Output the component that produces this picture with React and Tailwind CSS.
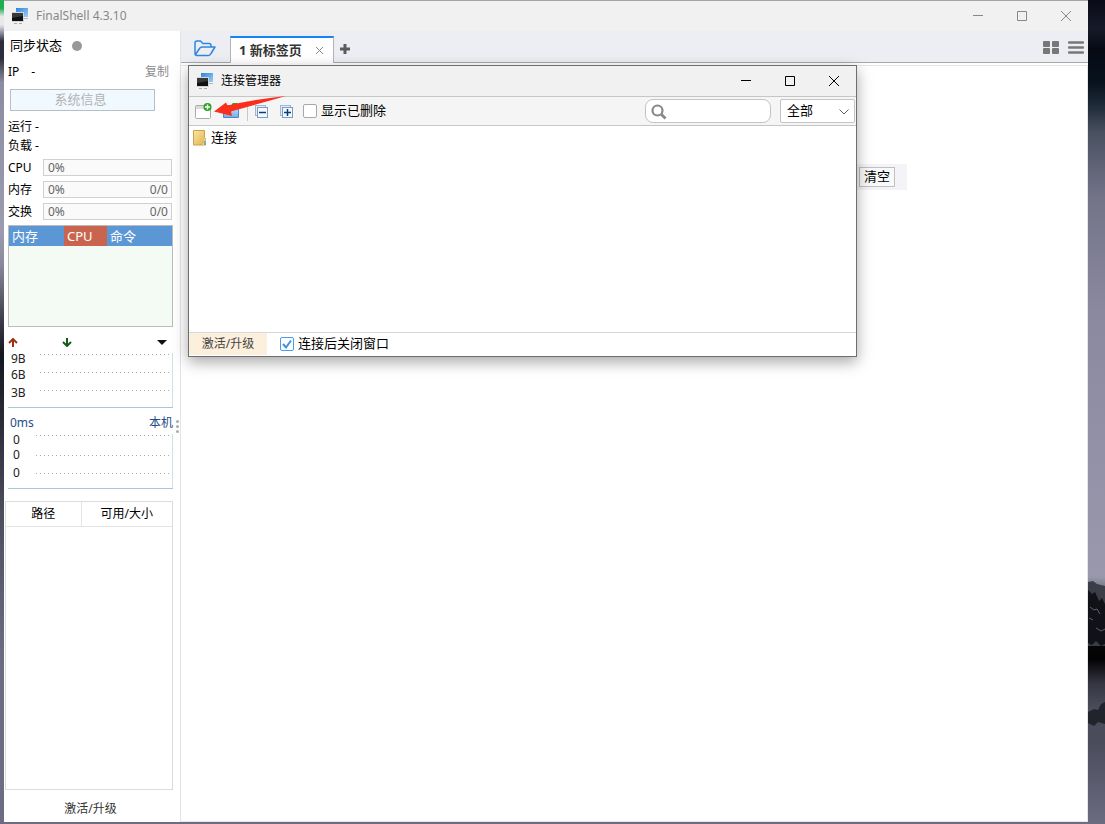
import { useState } from "react"

const usage = [
  { label: "CPU", percent: "0%", detail: "" },
  { label: "内存", percent: "0%", detail: "0/0" },
  { label: "交换", percent: "0%", detail: "0/0" },
]

// Two overlapping monitors, used in both title bars
function AppIcon() {
  return (
    <svg viewBox="0 0 16 16" className="w-4 h-4">
      <defs>
        <linearGradient id="screen" x1="0" y1="0" x2="1" y2="1">
          <stop offset="0" stopColor="#2f83dc" />
          <stop offset="1" stopColor="#9bd0f8" />
        </linearGradient>
      </defs>
      <rect x="4" y="0" width="12" height="9" fill="url(#screen)" />
      <rect x="12" y="10" width="4" height="1" fill="#b8b8b8" />
      <rect x="0" y="4" width="12" height="10" fill="#d4d4d4" />
      <rect x="0" y="5" width="11" height="8" fill="#111" />
      <path d="M0 5h11v3l-11 2z" fill="#383838" />
      <path d="M2 15h3v1H2zM7 15h3v1H7z" fill="#aaa" />
    </svg>
  )
}

function WindowButtons({ color }) {
  return (
    <div className="flex" style={{ color }}>
      <button aria-label="最小化" className="w-11 h-[30px] flex items-center justify-center">
        <svg width="10" height="10" stroke="currentColor"><path d="M0 4.5h10" /></svg>
      </button>
      <button aria-label="最大化" className="w-11 h-[30px] flex items-center justify-center">
        <svg width="10" height="10" fill="none" stroke="currentColor"><path d="M.5.5h9v9h-9z" /></svg>
      </button>
      <button aria-label="关闭" className="w-11 h-[30px] flex items-center justify-center">
        <svg width="10" height="10" stroke="currentColor"><path d="M0 0l10 10M10 0L0 10" /></svg>
      </button>
    </div>
  )
}

// Small line chart: labels on the left, dotted grid lines, border right and bottom
function Chart({ rows, left, base }) {
  return (
    <svg viewBox="0 0 165 55" className="block w-full overflow-visible" fontFamily="'Noto Sans', sans-serif">
      {rows.map((row) => (
        <g key={row.y}>
          <text x={base} y={row.textY} fontSize="12" fill="#222">{row.label}</text>
          <path d={`M${left} ${row.y + 0.5}H163`} stroke="#aaa" strokeDasharray="1 3" />
        </g>
      ))}
      <path d="M164.5 0V55" stroke="#cfe2e8" />
      <path d="M0 54.5H165" stroke="#a9c9d2" />
    </svg>
  )
}

function Sidebar() {
  return (
    <aside className="w-[177px] shrink-0 bg-white border-r border-[#e4e4e4] flex flex-col pl-1 pr-[7px]">
      <div className="flex items-center h-[29px] pl-0.5">
        <span>同步状态</span>
        <span className="ml-[10px] w-[10px] h-[10px] rounded-full bg-[#999]" />
      </div>
      <div className="flex items-center h-6 pr-1 text-xs">
        <span>IP</span>
        <span className="ml-3">-</span>
        <button className="ml-auto text-[#8c8c8c]">复制</button>
      </div>
      <button className="mt-[5px] ml-0.5 mr-[18px] h-[22px] shrink-0 border border-[#b8bfc3] bg-[#f0f9ff] pr-1 text-[#b3b3b3]">
        系统信息
      </button>

      <div className="mt-[6px] text-xs leading-[19px]">
        <div>运行 -</div>
        <div>负载 -</div>
      </div>
      <div className="mt-1 flex flex-col gap-[5px] text-xs pr-px">
        {usage.map((item) => (
          <div key={item.label} className="flex items-center h-[17px]">
            <span className="w-[35px]">{item.label}</span>
            <div className="flex-1 h-[17px] flex items-center justify-between border border-[#d0d0d0] bg-[#fafafa] text-[#666] pl-1 pr-[3px]">
              <span>{item.percent}</span>
              <span>{item.detail}</span>
            </div>
          </div>
        ))}
      </div>

      <div className="mt-[5px] h-[102px] shrink-0 border border-[#bcbcbc] bg-[#f4faf4]">
        <table className="w-full table-fixed text-white leading-5">
          <thead>
            <tr className="bg-[#5b97d5] text-left">
              <th className="w-[55px] p-0 pl-[3px] font-normal">内存</th>
              <th className="w-[43px] p-0 pl-[3px] font-normal bg-[#c9654f]">CPU</th>
              <th className="p-0 pl-[3px] font-normal">命令</th>
            </tr>
          </thead>
        </table>
      </div>

      {/* network traffic */}
      <div className="mt-[8px] h-[15px] flex items-center">
        <svg width="10" height="9" className="text-[#a0330f]" fill="none" stroke="currentColor" strokeWidth="2"><path d="M1 5l4-4 4 4M5 1v8" /></svg>
        <svg width="10" height="9" className="ml-11 text-[#155c1b]" fill="none" stroke="currentColor" strokeWidth="2"><path d="M1 4l4 4 4-4M5 8V0" /></svg>
        <button aria-label="网卡" className="ml-auto mr-[6px]">
          <svg width="10" height="5" fill="#111"><path d="M0 0h10L5 5z" /></svg>
        </button>
      </div>
      <div className="mt-[3px]">
        <Chart
          left={32}
          base={3}
          rows={[
            { label: "9B", y: 1, textY: 10 },
            { label: "6B", y: 19, textY: 26 },
            { label: "3B", y: 37, textY: 44 },
          ]}
        />
      </div>

      {/* latency */}
      <div className="mt-[6px] h-[18px] flex items-center justify-between pl-0.5 text-xs text-[#1f4e86]">
        <span>0ms</span>
        <button>本机</button>
      </div>
      <div className="mt-[2px]">
        <Chart
          left={28}
          base={5}
          rows={[
            { label: "0", y: 1, textY: 10 },
            { label: "0", y: 21, textY: 25 },
            { label: "0", y: 39, textY: 43 },
          ]}
        />
      </div>

      <div className="mt-3 -ml-[3px] flex-1 border border-[#dcdcdc]">
        <table className="w-full table-fixed text-xs leading-6">
          <thead>
            <tr className="border-b border-[#e4e4e4]">
              <th className="w-[75px] p-0 font-normal border-r border-[#e4e4e4]">路径</th>
              <th className="p-0 font-normal">可用/大小</th>
            </tr>
          </thead>
        </table>
      </div>
      <button className="h-8 pt-[6px] shrink-0 text-xs text-[#333]">激活/升级</button>
    </aside>
  )
}

function TabBar() {
  return (
    <div className="h-8 shrink-0 flex items-end bg-[#eceef3] border-b border-[#a9a9ab]">
      <button aria-label="打开" className="ml-[13px] w-9 h-[27px] flex items-center">
        <svg width="22" height="17" viewBox="0 0 22 17" fill="none" stroke="#2f86dc" strokeWidth="1.5" strokeLinejoin="round">
          <path d="M3 15.500Q1 15.500 1 13.500V3Q1 1 3 1h3.500l2.500 2.500h6Q17 3.500 17 5.500V7" />
          <path d="M1.500 14.500L5.500 8.500Q6.500 7 8 7h13L17 13.500Q16 15.500 14.500 15.500H3" />
        </svg>
      </button>
      <div className="-mb-px h-[27px] w-[104px] flex items-center justify-between border border-t-2 border-b-0 border-[#b4b4b8] border-t-[#1683f5] bg-white pl-2 pr-[9px]">
        <span className="font-bold text-[#333]">1 新标签页</span>
        <button aria-label="关闭标签" className="text-[#888]">
          <svg width="9" height="9" className="block" stroke="currentColor"><path d="M1 1l7 7M8 1L1 8" /></svg>
        </button>
      </div>
      <button aria-label="新建标签" className="ml-[6px] h-[27px] flex items-center">
        <svg width="10" height="10" stroke="#5b5b5b" strokeWidth="3"><path d="M5 0v10M0 5h10" /></svg>
      </button>
      <div className="ml-auto mr-1 h-[30px] flex items-center gap-[9px]">
        <button aria-label="网格">
          <svg width="16" height="13" className="block" fill="#777">
            <rect width="7" height="6" rx="1" />
            <rect x="9" width="7" height="6" rx="1" />
            <rect y="7" width="7" height="6" rx="1" />
            <rect x="9" y="7" width="7" height="6" rx="1" />
          </svg>
        </button>
        <button aria-label="菜单">
          <svg width="16" height="13" className="block" stroke="#777" strokeWidth="2.400" strokeLinecap="round"><path d="M1 1.500h14M1 6.500h14M1 11.500h14" /></svg>
        </button>
      </div>
    </div>
  )
}

function TreeButton({ label, d }) {
  return (
    <button aria-label={label}>
      <svg width="13" height="13" className="block">
        <rect x=".5" y=".5" width="10" height="10" fill="#e5eef8" stroke="#9db7d3" />
        <rect x="2.500" y="2.500" width="10" height="10" fill="#f4f9ff" stroke="#7b9cc2" />
        <path d={d} stroke="#0c3b75" strokeWidth="1.500" />
      </svg>
    </button>
  )
}

function ConnectionManager() {
  const [showDeleted, setShowDeleted] = useState(false)
  const [closeAfter, setCloseAfter] = useState(true)

  return (
    <section className="absolute left-[188px] top-[65px] w-[669px] h-[292px] flex flex-col border border-[#6e6e6e] bg-white shadow-[0_5px_14px_rgba(0,0,0,0.35)]">
      <header className="h-[30px] shrink-0 flex items-center bg-[#f1f1f1] pl-2">
        <AppIcon />
        <h2 className="ml-2 text-xs">连接管理器</h2>
        <div className="ml-auto">
          <WindowButtons color="#000" />
        </div>
      </header>

      <div className="relative h-[30px] shrink-0 flex items-center border-y border-[#c6c6c6] bg-[#f5f5f5] pl-[6px] pr-px">
        <button aria-label="新建连接">
          <svg width="17" height="16" className="block">
            <rect x=".5" y="2.500" width="15" height="13" rx="1" fill="#fff" stroke="#aaa" />
            <path d="M1 3h14v3H1z" fill="#dadada" />
            <circle cx="12.500" cy="4" r="4" fill="#27a51f" />
            <path d="M12.500 1.500v5M10 4h5" stroke="#fff" strokeWidth="1.500" />
          </svg>
        </button>
        <button aria-label="新建文件夹" className="ml-[10px]">
          <svg width="18" height="16" className="block">
            <defs>
              <linearGradient id="blueFolder" x1="0" y1="0" x2="0" y2="1">
                <stop offset="0" stopColor="#b8d8fa" />
                <stop offset="1" stopColor="#74aeee" />
              </linearGradient>
            </defs>
            <path d="M1 4q0-2 2-2h4l2 2h7q1 0 1 1v9q0 1-1 1H2q-1 0-1-1z" fill="#4f86c8" />
            <path d="M2 6h14v8H2z" fill="url(#blueFolder)" />
            <circle cx="13" cy="3" r="3.500" fill="#27a51f" />
            <path d="M13 1v4M11 3h4" stroke="#fff" />
          </svg>
        </button>
        <span className="mx-[7px] w-px h-5 bg-[#c8c8c8]" />
        <TreeButton label="全部折叠" d="M4 7.500h7" />
        <span className="w-3" />
        <TreeButton label="全部展开" d="M4 7.500h7M7.500 4v7" />
        <label className="ml-[10px] flex items-center gap-1">
          <input
            type="checkbox"
            checked={showDeleted}
            onChange={(e) => setShowDeleted(e.target.checked)}
            className="appearance-none w-[14px] h-[14px] rounded-xs border border-[#a8a8a8] bg-white checked:bg-[#4a9be8]"
          />
          显示已删除
        </label>

        <div className="relative ml-auto">
          <svg width="16" height="16" viewBox="0 0 16 16" className="absolute left-[6px] top-[5px]" fill="none" stroke="#888">
            <circle cx="6.500" cy="6.500" r="5" strokeWidth="2.200" />
            <path d="M10.500 10.500l4 4" strokeWidth="2.800" />
          </svg>
          <input type="search" aria-label="搜索" className="block w-[126px] h-6 pl-6 pr-2 rounded-lg border border-[#c4c4c4] bg-white outline-none" />
        </div>
        <div className="relative ml-[9px]">
          <select aria-label="筛选" defaultValue="全部" className="block appearance-none w-[75px] h-6 pl-[6px] rounded-xs border border-[#c4c4c4] bg-white">
            <option>全部</option>
          </select>
          <svg width="10" height="6" className="absolute right-[6px] top-[10px] pointer-events-none" fill="none" stroke="#666"><path d="M.5.500l4.500 4.500 4.500-4.500" /></svg>
        </div>

        {/* red arrow pointing at the new connection button */}
        <svg width="72" height="24" className="absolute left-[25px] -top-[1px] pointer-events-none">
          <path d="M0 15.500L12 6.500L13.500 9.500Q42 3 72 0Q44 8 17 15.500L18 20Z" fill="#fb2d1d" />
        </svg>
      </div>

      <div className="flex-1 pl-1 pt-[3px]">
        <div className="flex items-center h-[17px]">
          <svg width="14" height="16">
            <defs>
              <linearGradient id="folder" x1="0" y1="0" x2="1" y2="1">
                <stop offset="0" stopColor="#fae6a4" />
                <stop offset="1" stopColor="#dfb24d" />
              </linearGradient>
            </defs>
            <path d="M.5.500h11v7l1 1v6.500H.5z" fill="url(#folder)" stroke="#cba14a" />
            <path d="M10 15l2-3v-3" fill="none" stroke="#f7e3a5" />
            <path d="M12 11v4" stroke="#55a9dc" strokeWidth="1.500" />
          </svg>
          <span className="ml-1">连接</span>
        </div>
      </div>

      <footer className="h-6 shrink-0 flex items-start border-t border-[#d8d8d8]">
        <button className="w-[78px] h-[22px] bg-[#fcefdc] text-xs text-[#444]">激活/升级</button>
        <label className="ml-[13px] h-[22px] flex items-center gap-1">
          <span className="relative w-[14px] h-[14px]">
            <input
              type="checkbox"
              checked={closeAfter}
              onChange={(e) => setCloseAfter(e.target.checked)}
              className="peer block appearance-none w-[14px] h-[14px] rounded-xs border border-[#4a9be8] bg-white"
            />
            <svg width="14" height="14" className="absolute inset-0 hidden peer-checked:block pointer-events-none" fill="none" stroke="#3c92e6" strokeWidth="2">
              <path d="M3 7l3 3.500L11 3.500" />
            </svg>
          </span>
          连接后关闭窗口
        </label>
      </footer>
    </section>
  )
}

export default function App() {
  return (
    <div className="relative h-screen flex bg-[#6c6d82] text-[13px] text-black font-['Noto_Sans','Noto_Sans_CJK_SC',sans-serif] overflow-hidden">
      {/* desktop wallpaper, left edge */}
      <div className="w-1 shrink-0 bg-[linear-gradient(#1fae54_0%,#1fae54_1%,#e8e8e8_2%,#e8e8e8_3%,#8c8ca0_4%,#2b2d3a_5%,#2b2d3a_7%,#8c8ca0_10%,#9c9bb0_28%,#8a8a9e_32%,#3a3c4a_39%,#15171f_43%,#2c2e3c_52%,#4c4e5e_62%,#6c6d82_80%,#6c6d82_100%)]" />

      <div className="flex-1 min-w-0 mb-0.5 flex flex-col bg-white">
        <header className="h-[31px] shrink-0 flex items-center bg-[#f1f1f1] border-t border-[#a5a5a5] pl-2 text-[#888]">
          <AppIcon />
          <h1 className="ml-2 text-xs">FinalShell 4.3.10</h1>
          <div className="ml-auto">
            <WindowButtons color="#888" />
          </div>
        </header>

        <div className="flex-1 min-h-0 flex">
          <Sidebar />
          <main className="flex-1 min-w-0 flex flex-col">
            <TabBar />
            <div className="mt-0.5 flex-1 border border-l-0 border-[#e6e6e6]">
              <div className="mt-[98px] ml-[670px] w-[56px] h-[26px] flex items-center bg-[#f3f3f8] pl-2">
                <button className="h-5 w-9 flex items-center justify-center border border-[#c0c0c0] bg-[#f9f9f9]">清空</button>
              </div>
            </div>
          </main>
        </div>
      </div>

      {/* desktop wallpaper, right edge: sky, rocks and their reflection */}
      <svg viewBox="0 0 17 824" preserveAspectRatio="none" className="w-[17px] h-full shrink-0">
        <defs>
          <linearGradient id="sky" x1="0" y1="0" x2="0" y2="1">
            <stop offset="0" stopColor="#080b16" />
            <stop offset=".035" stopColor="#171a28" />
            <stop offset=".06" stopColor="#060a15" />
            <stop offset=".1" stopColor="#07121d" />
            <stop offset=".125" stopColor="#1b2735" />
            <stop offset=".16" stopColor="#48505f" />
            <stop offset=".24" stopColor="#747489" />
            <stop offset=".38" stopColor="#8a899f" />
            <stop offset=".55" stopColor="#9291a7" />
            <stop offset=".7" stopColor="#9998ac" />
            <stop offset=".73" stopColor="#50525e" />
            <stop offset=".77" stopColor="#08080b" />
            <stop offset=".8" stopColor="#030304" />
            <stop offset=".83" stopColor="#353642" />
            <stop offset=".86" stopColor="#4c4d5b" />
            <stop offset=".9" stopColor="#4a4b5b" />
            <stop offset="1" stopColor="#6b6c80" />
          </linearGradient>
        </defs>
        <rect width="17" height="824" fill="url(#sky)" />
        <path d="M0 582l5-1 4 3 8 2v60H0z" fill="#3b3e47" />
        <path d="M0 590l4 4 3-2 4 9 3-3 3 6v40l-4 2-5-5-4 4-4-2z" fill="#101217" />
        <path d="M2 607l4 3 3-1 3 5M8 628l5 3 4-2M1 618l4 2" fill="none" stroke="#5c6069" />
        <path d="M0 712l6-3 4 1 3-6 4-2v22l-7-2-4 4-6-3z" fill="#22242c" />
      </svg>

      <div aria-hidden="true" className="absolute left-[176px] top-[420px] flex flex-col gap-0.5">
        <span className="w-[3px] h-[3px] rounded-full bg-[#aaa]" />
        <span className="w-[3px] h-[3px] rounded-full bg-[#aaa]" />
        <span className="w-[3px] h-[3px] rounded-full bg-[#aaa]" />
      </div>

      <ConnectionManager />
    </div>
  )
}
